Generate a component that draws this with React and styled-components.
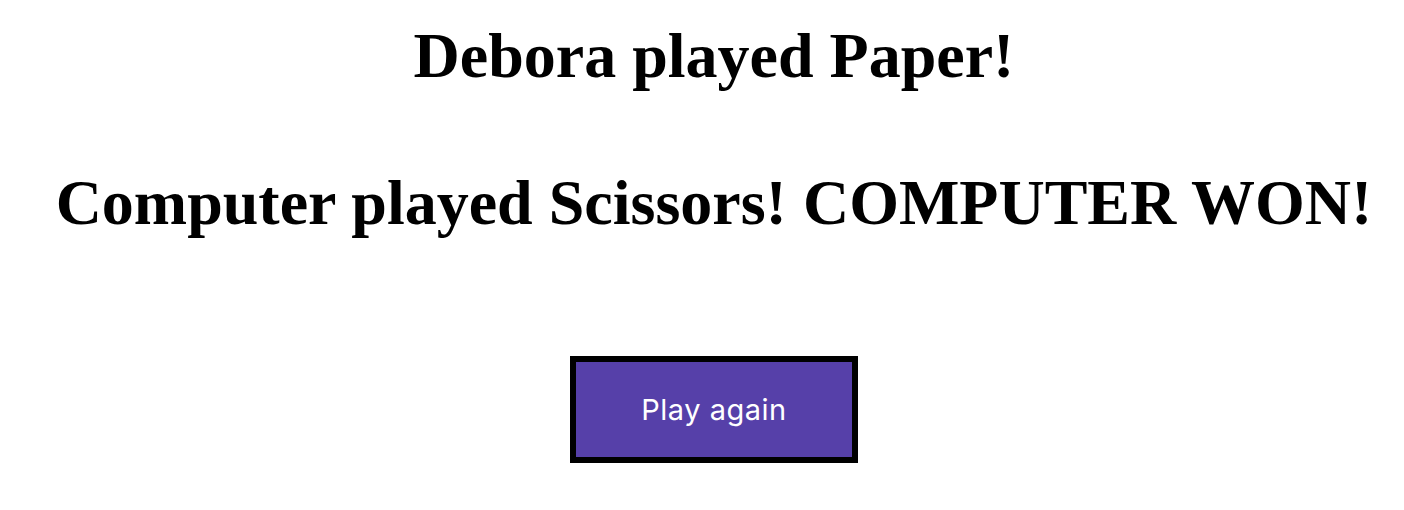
import React from "react";
import styled, { createGlobalStyle } from "styled-components";

const Global = createGlobalStyle`
  html, body { margin: 0; padding: 0; background: #fff; }
  body { padding: 19px 0 0 24px; }
`;

const Page = styled.main`
  display: flex;
  flex-direction: column;
  align-items: center;
`;

const Result = styled.h1`
  margin: 0;
  display: flex;
  flex-direction: column;
  align-items: center;
  gap: 73.6px;
  font-family: "Liberation Serif", "Times New Roman", serif;
  font-weight: 700;
  font-size: 64px;
  line-height: 73.6px;
  color: #000;
  text-align: center;
`;

const Line = styled.span`
  display: block;
  white-space: nowrap;
`;

const PlayButton = styled.button`
  margin-top: 116px;
  box-sizing: border-box;
  width: 288px;
  height: 107px;
  border: 6px solid #000;
  background: #5640a9;
  color: #fff;
  font-family: Inter, "Noto Sans", sans-serif;
  font-size: 29px;
  letter-spacing: 0.5px;
  font-weight: 400;
  cursor: pointer;
  display: flex;
  align-items: center;
  justify-content: center;
  padding: 0;
`;

export default function App() {
  return (
    <>
      <Global />
      <Page>
        <Result>
          <Line>Debora played Paper!</Line>
          <Line>Computer played Scissors! COMPUTER WON!</Line>
        </Result>
        <PlayButton>Play again</PlayButton>
      </Page>
    </>
  );
}
